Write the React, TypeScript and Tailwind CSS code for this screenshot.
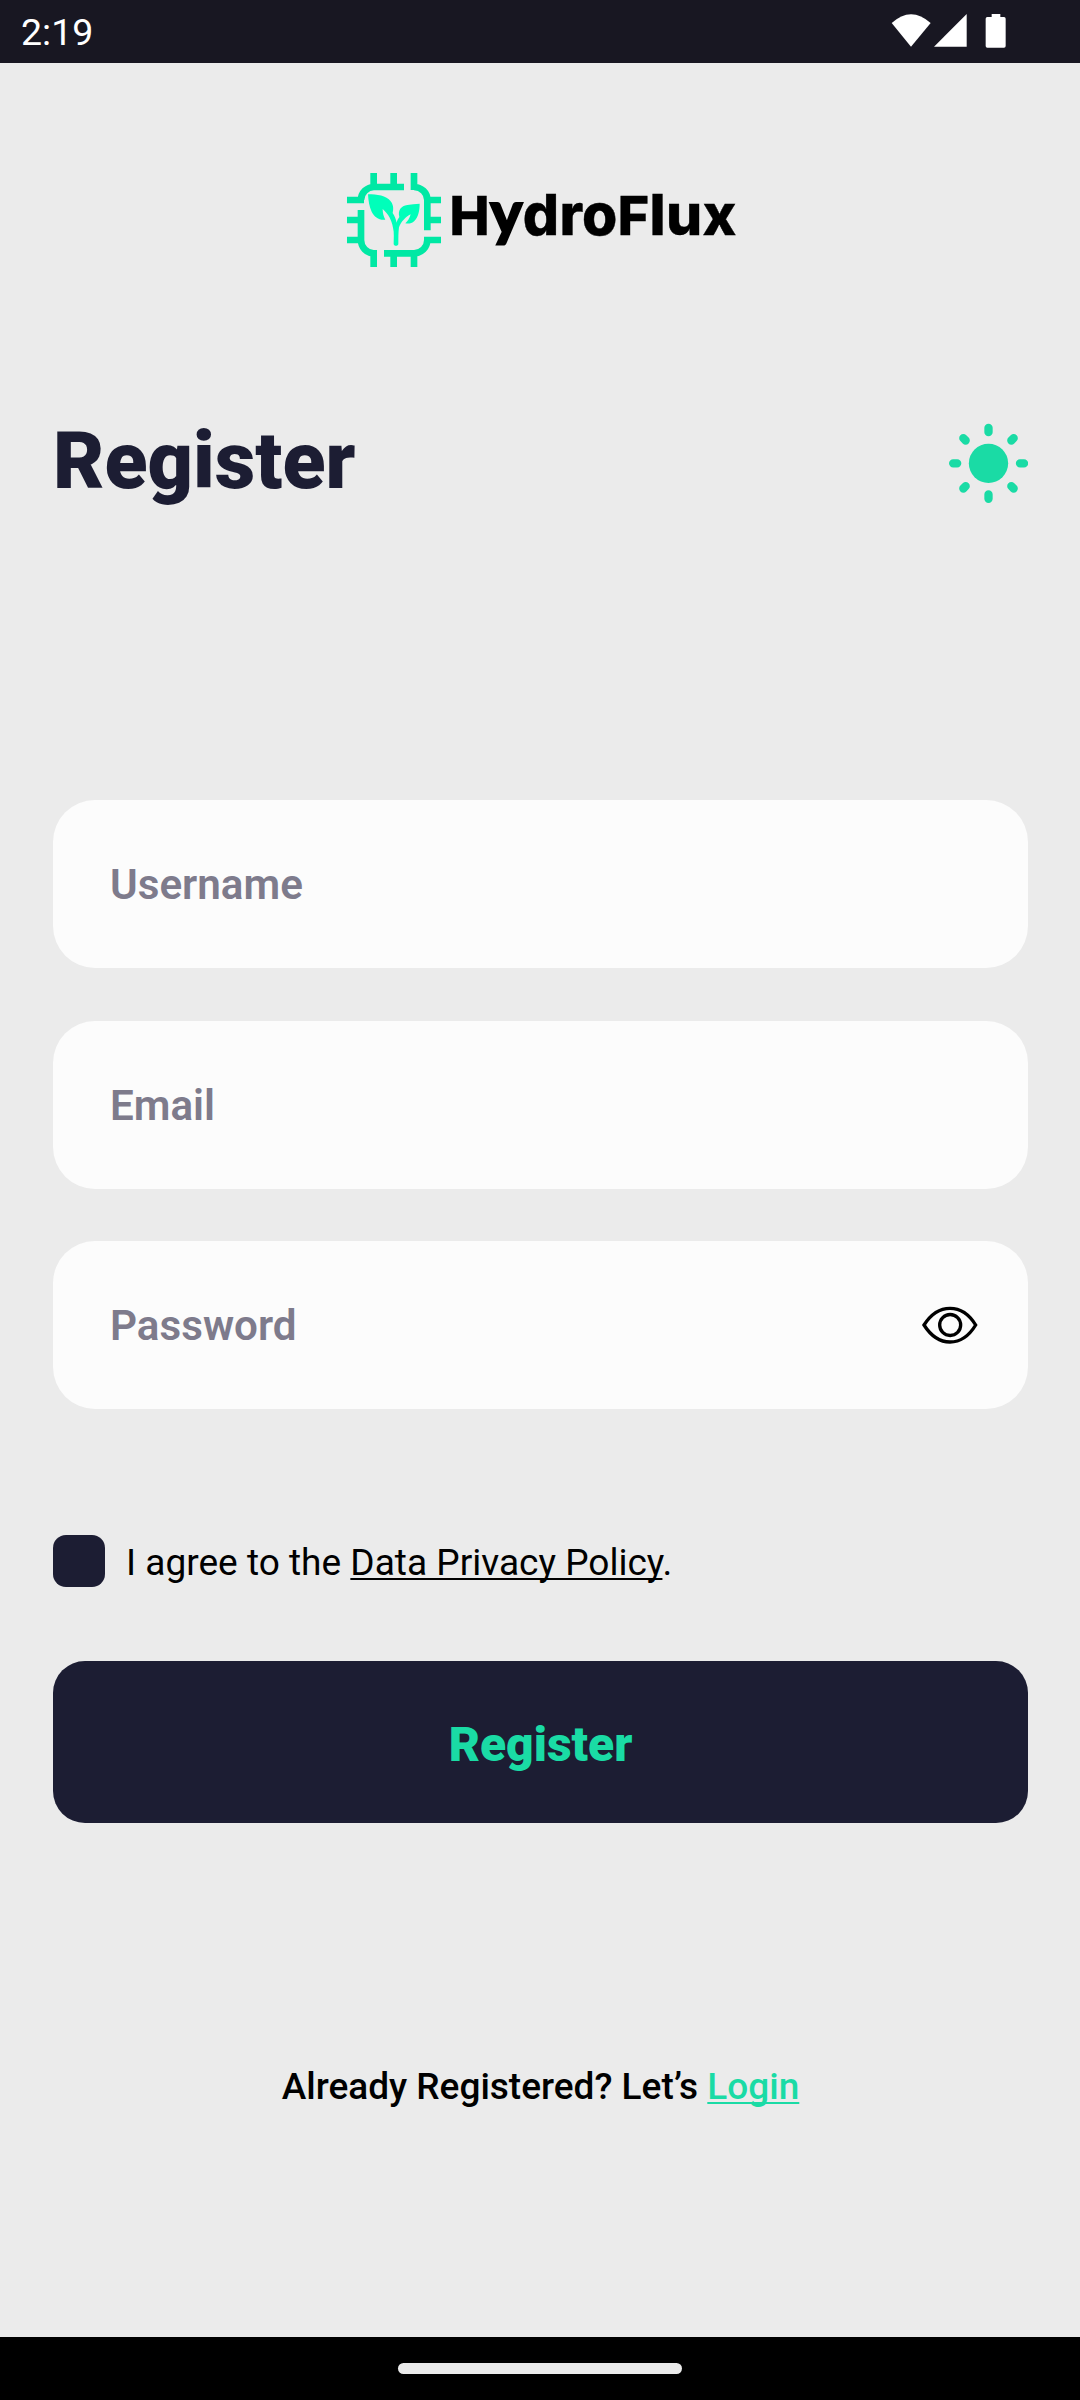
import { useState } from "react";

function StatusBar() {
  return (
    <header className="flex h-[63px] items-center justify-between bg-[#181722] pl-[21px] pr-[73px] text-white">
      <span className="pt-[1px] text-[37.5px] leading-[60px]">2:19</span>
      <svg className="mb-[3px] h-[36px] w-[116px]" viewBox="0 0 348 108" fill="#fff">
        <path d="M2 33Q60-20 119 33L60 104Z" />
        <path d="M129 104H227V6Z" />
        <path d="M302 6h26v9h11q5 0 5 5v82q0 5-5 5h-50q-5 0-5-5V20q0-5 5-5h13z" />
      </svg>
    </header>
  );
}

function Logo() {
  return (
    <div className="flex h-[94px] items-center">
      <svg className="size-[94px] shrink-0" viewBox="50 40 282 282" fill="none">
        <g stroke="#00e8a4" strokeWidth="20">
          <path d="M50 121H101M92 121C92 99 110 82 131 82H221M130 40V82M190 40V82" />
          <path d="M251 40V91M251 82C273 82 291 99 291 121V212M291 121H332M291 181H332" />
          <path d="M332 241H281M291 241C291 263 273 281 251 281H161M190 281V322M251 281V322" />
          <path d="M130 322V271M130 281C109 281 92 263 92 241V151M50 181H92M50 241H92" />
        </g>
        <g fill="#00ffba">
          <path d="M113 104C140 104 168 108 181 125C191 138 189 151 187 160C193 169 197 180 199 189C200 182 204 177 207 172C202 151 212 139 231 136Q248 133 268 132C268 152 264 173 252 184C245 191 235 193 225 191C232 185 238 176 241 164C226 172 212 186 206 203C204 217 204 235 204 252C204 260 190 260 190 252C190 238 192 218 188 204C184 181 174 163 157 148C157 161 160 171 165 180C147 183 132 172 124 156C117 142 114 123 113 104Z" />
        </g>
      </svg>
      <div className="ml-[9px] flex w-[300px] items-baseline pb-[12px] font-['Inter'] text-[57px] font-extrabold leading-[60px] tracking-[0.35px] text-black [-webkit-text-stroke:0.4px_#000]">
        <span className="text-[53.5px]">H</span>
        <span className="font-['Lato'] text-[61px] font-black [-webkit-text-stroke:1.8px_#000]">y</span>
        <span>dro</span>
        <span className="text-[53.5px]">F</span>
        <span>lux</span>
      </div>
    </div>
  );
}

function SunIcon() {
  return (
    <svg className="size-[80px]" viewBox="54 39.5 240 240" stroke="#1adba5" strokeWidth="25" strokeLinecap="round">
      <circle cx="175.5" cy="160.5" r="59" fill="#1adba5" stroke="none" />
      <path d="M175.500 54v13M175.500 254v13M69.500 160.500h12M270 160.500h12M100 85l7 7M251 85l-7 7M100 236l7-7M251 236l-7-7" />
    </svg>
  );
}

function EyeIcon() {
  return (
    <svg className="h-[38px] w-[56px]" viewBox="186 229 168 114" fill="none" stroke="#000" strokeWidth="10">
      <path d="M192 286C213 253 240 236 270 236S327 253 347 286C327 319 300 337 270 337S213 319 192 286Z" />
      <circle cx="270.500" cy="286" r="31.500" />
    </svg>
  );
}

function Field({ label, type = "text", toggle }: { label: string; type?: string; toggle?: boolean }) {
  const [visible, setVisible] = useState(false);
  return (
    <div className="flex h-[168px] items-center rounded-[42px] bg-[#fcfcfc] pl-[57px] pr-[50px]">
      <input
        type={visible ? "text" : type}
        placeholder={label}
        className="mt-[2px] min-w-0 flex-1 bg-transparent text-[42.2px] font-semibold leading-[60px] outline-none placeholder:text-[#7e7b8c] placeholder:opacity-100"
      />
      {toggle && (
        <button type="button" aria-label="Show password" onClick={() => setVisible(!visible)}>
          <EyeIcon />
        </button>
      )}
    </div>
  );
}

export default function App() {
  return (
    <div className="flex h-[2400px] w-[1080px] flex-col bg-[#ebebeb] font-['Roboto',sans-serif]">
      <StatusBar />
      <main className="flex flex-1 flex-col pl-[53px] pr-[52px]">
        <div className="mt-[110px] pl-[293.500px]">
          <Logo />
        </div>
        <div className="mt-[156px] flex h-[80px] items-center justify-between">
          <h1 className="pb-[4px] text-[79px] font-black leading-[78px] text-[#1c1d33]">Register</h1>
          <SunIcon />
        </div>
        <form className="mt-[297px] flex flex-col">
          <div className="flex flex-col gap-[52.500px]">
            <Field label="Username" />
            <Field label="Email" />
            <Field label="Password" type="password" toggle />
          </div>
          <div className="mt-[126px] flex h-[52px] items-center">
            <span className="size-[52px] rounded-[13px] bg-[#1c1d33]" />
            <p className="ml-[21px] pt-[4px] text-[37.05px] leading-[50px] text-black">
              I agree to the{" "}
              <a className="underline decoration-2 underline-offset-[3px] [text-decoration-skip-ink:none]">Data Privacy Policy</a>.
            </p>
          </div>
          <button type="button" className="mt-[74px] h-[162px] rounded-[32px] bg-[#1c1d33] pt-[6px] text-[48px] font-black leading-[60px] text-[#1adba5]">
            Register
          </button>
        </form>
        <p className="mt-[234px] text-center text-[37px] font-medium leading-[60px] text-black">
          Already Registered? Let’s{" "}
          <a className="text-[#1adba5] underline decoration-2 underline-offset-[3px] [text-decoration-skip-ink:none]">Login</a>
        </p>
      </main>
      <footer className="flex h-[63px] justify-center bg-black pt-[26px]">
        <div className="h-[11px] w-[284px] rounded-full bg-[#ebebeb]" />
      </footer>
    </div>
  );
}
